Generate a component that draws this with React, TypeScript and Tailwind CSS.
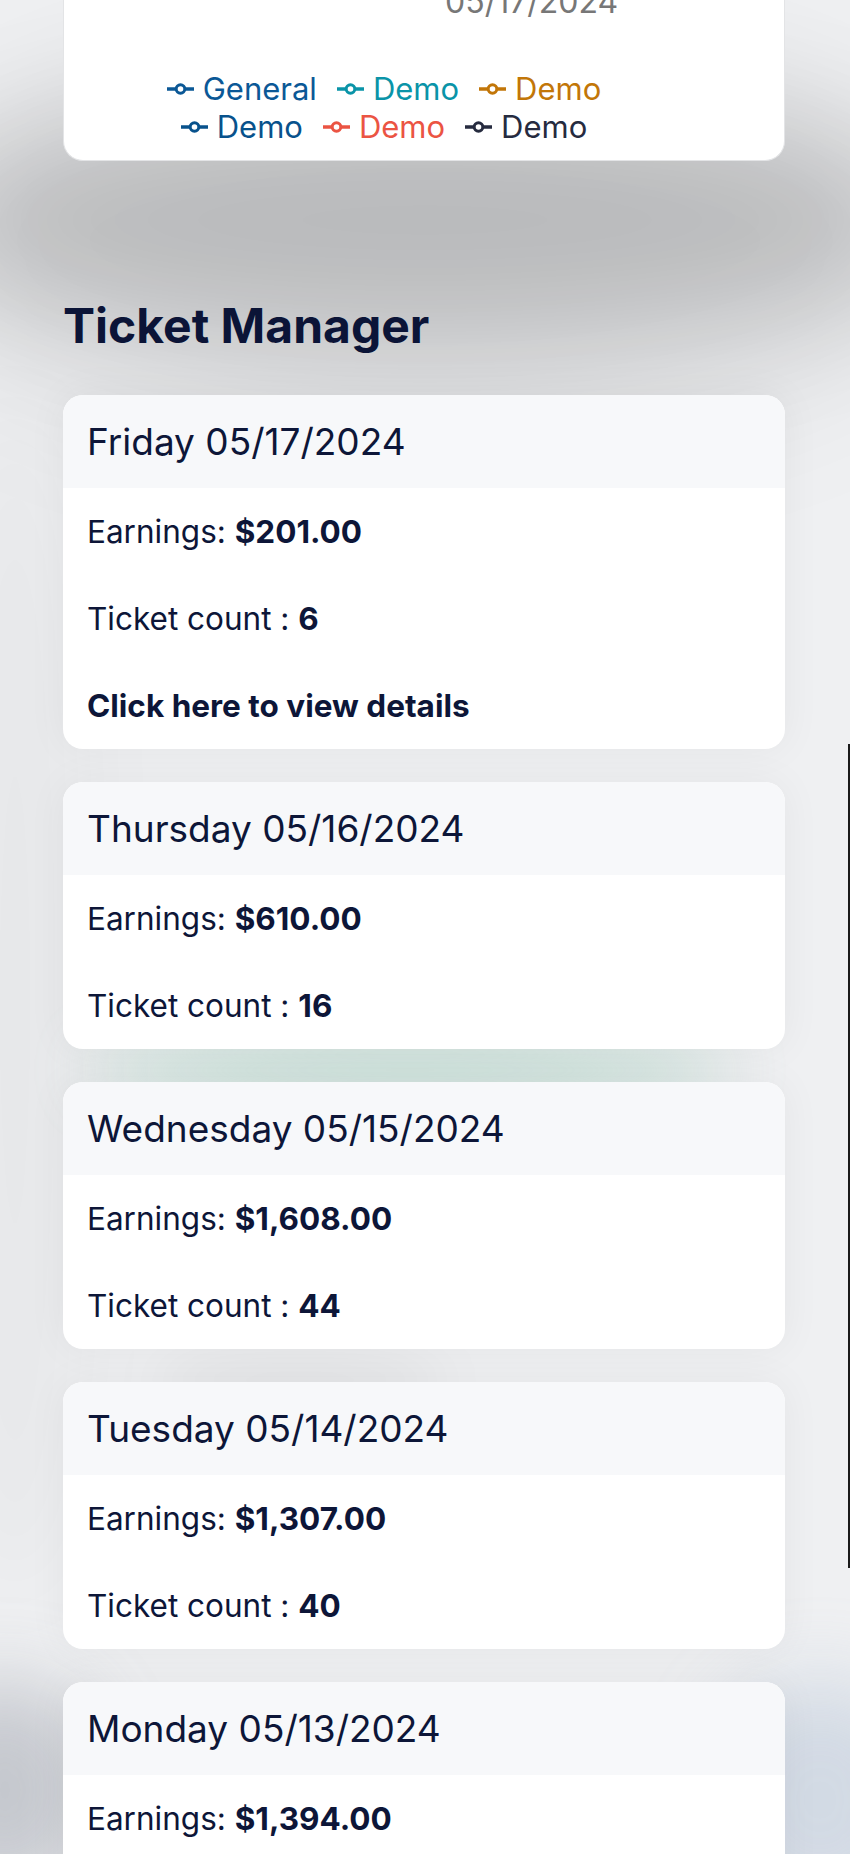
import React from "react";

const legendRow1 = [
  { label: "General", color: "#0b5896" },
  { label: "Demo", color: "#0a94a8" },
  { label: "Demo", color: "#c27608" },
];
const legendRow2 = [
  { label: "Demo", color: "#08528c" },
  { label: "Demo", color: "#eb5443" },
  { label: "Demo", color: "#262b3f" },
];

type Day = { day: string; earnings: string; count: string; details?: boolean };
const days: Day[] = [
  { day: "Friday 05/17/2024", earnings: "$201.00", count: "6", details: true },
  { day: "Thursday 05/16/2024", earnings: "$610.00", count: "16" },
  { day: "Wednesday 05/15/2024", earnings: "$1,608.00", count: "44" },
  { day: "Tuesday 05/14/2024", earnings: "$1,307.00", count: "40" },
  { day: "Monday 05/13/2024", earnings: "$1,394.00", count: "38" },
];

function Marker({ color }: { color: string }) {
  return (
    <svg width="27" height="14" viewBox="0 0 27 14" className="shrink-0">
      <line x1="0" y1="7" x2="27" y2="7" stroke={color} strokeWidth="3.5" />
      <circle cx="13.5" cy="7" r="4.3" fill="white" stroke={color} strokeWidth="3" />
    </svg>
  );
}

function LegendRow({ items }: { items: { label: string; color: string }[] }) {
  return (
    <div className="flex justify-center gap-x-[20px] h-[38px] items-center">
      {items.map((it, i) => (
        <div key={i} className="flex items-center gap-[9px]">
          <Marker color={it.color} />
          <span className="text-[31px] leading-[38px]" style={{ color: it.color }}>
            {it.label}
          </span>
        </div>
      ))}
    </div>
  );
}

function DayCard({ d }: { d: Day }) {
  return (
    <div className="w-[722px] rounded-[20px] overflow-hidden bg-white shadow-[0_0_40px_rgba(0,0,0,0.05)]">
      <div className="h-[93px] bg-[#f7f8fa] px-6 flex items-center">
        <span className="text-[37px] leading-[93px] text-[#0d1638]">{d.day}</span>
      </div>
      <div className="px-6 text-[31.5px] text-[#0d1638]">
        <p className="h-[87px] leading-[87px]">
          Earnings: <span className="font-bold">{d.earnings}</span>
        </p>
        <p className="h-[87px] leading-[87px]">
          Ticket count : <span className="font-bold">{d.count}</span>
        </p>
        {d.details && (
          <p className="h-[87px] leading-[87px] font-bold">Click here to view details</p>
        )}
      </div>
    </div>
  );
}

export default function App() {
  return (
    <div
      className="relative w-[850px] h-[1854px] overflow-hidden bg-[#eff0f2]"
      style={{ fontFamily: "Inter, 'Noto Sans', sans-serif" }}
    >
      {/* decorative background glows */}
      <div className="absolute left-[-80px] right-[-80px] top-[100px] h-[240px] rounded-[50%] bg-[rgba(0,0,0,0.16)] blur-[60px]" />
      <div className="absolute left-[-100px] right-[-100px] top-[40px] h-[400px] rounded-[50%] bg-[rgba(0,0,0,0.07)] blur-[70px]" />
      <div className="absolute left-[90px] w-[640px] top-[1035px] h-[70px] rounded-[50%] bg-[rgba(160,205,188,0.5)] blur-[30px]" />
      <div className="absolute left-[-90px] w-[190px] top-[1680px] h-[220px] rounded-[50%] bg-[rgba(120,125,140,0.35)] blur-[40px]" />
      <div className="absolute right-[-80px] w-[220px] top-[1680px] h-[240px] rounded-[50%] bg-[rgba(150,170,200,0.32)] blur-[40px]" />
      <div className="absolute left-[150px] w-[300px] top-[1355px] h-[50px] rounded-[50%] bg-[rgba(0,0,0,0.05)] blur-[25px]" />
      <div className="absolute left-[-60px] w-[150px] top-[400px] h-[1200px] rounded-[50%] bg-[rgba(0,0,0,0.03)] blur-[40px]" />

      <div className="relative z-10 ml-[63px] w-[722px]">
        {/* top chart card (scrolled) */}
        <div className="-mt-[40px] pt-[24px] pb-[14px] bg-white rounded-b-[20px] border border-t-0 border-[#e3e4e6]">
          <div className="pl-[381px] text-[32px] leading-[36px] text-[#777777]">05/17/2024</div>
          <div className="mt-[50px] pr-[80px]">
            <LegendRow items={legendRow1} />
            <LegendRow items={legendRow2} />
          </div>
        </div>

        <h1 className="mt-[136px] text-[48px] leading-[58px] font-bold text-[#0b1437]">
          Ticket Manager
        </h1>

        <div className="mt-[40px] flex flex-col gap-[33px]">
          {days.map((d, i) => (
            <DayCard key={i} d={d} />
          ))}
        </div>
      </div>

      {/* scrollbar thumb */}
      <div className="absolute right-0 top-[744px] w-[2px] h-[824px] bg-[#1a1a1a] z-20" />
    </div>
  );
}
